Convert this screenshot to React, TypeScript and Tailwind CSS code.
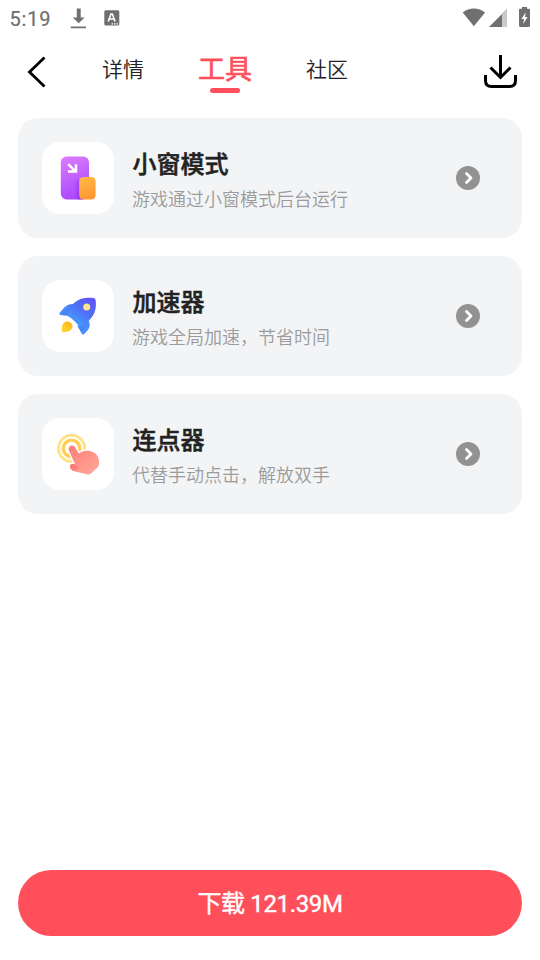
import React, { useState } from 'react';
import clsx from 'clsx';

interface Tool {
    id: string;
    title: string;
    description: string;
    icon: React.FC;
}

const WindowIcon: React.FC = () => (
    <svg width="72" height="72" viewBox="0 0 72 72" fill="none">
        <defs>
            <linearGradient id="window-back" x1="22" y1="14" x2="40" y2="58" gradientUnits="userSpaceOnUse">
                <stop stopColor="#dc7cfd" />
                <stop offset="1" stopColor="#a544fb" />
            </linearGradient>
            <linearGradient id="window-front" x1="40" y1="35" x2="50" y2="57" gradientUnits="userSpaceOnUse">
                <stop stopColor="#ffb946" />
                <stop offset="1" stopColor="#ff9530" />
            </linearGradient>
            <linearGradient id="window-shade" x1="32" y1="0" x2="39" y2="0" gradientUnits="userSpaceOnUse">
                <stop stopColor="#8f25e0" stopOpacity="0" />
                <stop offset="1" stopColor="#8a18d8" stopOpacity="0.6" />
            </linearGradient>
        </defs>
        <rect x="18.8" y="14.5" width="28.2" height="43" rx="5.8" fill="url(#window-back)" />
        <path d="M32 38h8v19.500h-8z" fill="url(#window-shade)" />
        <rect x="37.2" y="35" width="16.4" height="22.5" rx="4.2" fill="url(#window-front)" />
        <path d="M26.2 22.2l7 7M34 22.3v7.3h-8" stroke="#fff" strokeWidth="2.5" />
    </svg>
);

const RocketIcon: React.FC = () => (
    <svg width="72" height="72" viewBox="0 0 72 72" fill="none">
        <defs>
            <linearGradient id="rocket-body" x1="52" y1="18" x2="33" y2="46" gradientUnits="userSpaceOnUse">
                <stop stopColor="#6251f5" />
                <stop offset="0.5" stopColor="#4f70f8" />
                <stop offset="1" stopColor="#43a4ff" />
            </linearGradient>
            <linearGradient id="rocket-fin" x1="20" y1="30" x2="46" y2="46" gradientUnits="userSpaceOnUse">
                <stop stopColor="#4b91fa" />
                <stop offset="0.5" stopColor="#3869ef" />
                <stop offset="1" stopColor="#4a8ffa" />
            </linearGradient>
            <linearGradient id="rocket-flame" x1="29" y1="41" x2="20" y2="52" gradientUnits="userSpaceOnUse">
                <stop stopColor="#ffb20d" />
                <stop offset="1" stopColor="#ffd83a" />
            </linearGradient>
        </defs>
        <path
            d="M34 24.3c-5-1.2-9.300.2-12 3.500l-4.200 5c-.9 1.200-.3 2.200 1 2.300l8 .8zM46 39.500c2.500 4 2.300 8-.5 11l-3.200 3.400c-1 1-2.200.7-2.800-.6L35.500 46z"
            fill="url(#rocket-fin)"
        />
        <path
            d="M25 35.500C27 26 34 18.700 43.500 17.900c2.600-.3 5.500-.3 7.800.2 1.400.2 2.200 1.200 2.400 2.500.9 8.700-1.300 14.700-6.200 19.300-2.600 2.600-6 5-10 7.300-2.700-4.200-7-8.700-12.500-11.700z"
            fill="url(#rocket-body)"
        />
        <circle cx="44.700" cy="27" r="3.500" fill="#ffe58a" />
        <path
            d="M21.500 43.300c2-2.200 5.100-2.300 7.200-.5 2.200 1.900 2.400 4.800.6 6.700-1.600 1.700-4.600 2.500-8.200 2.700-1.200 0-1.700-.6-1.500-1.700.4-2.500.3-5.200 1.900-7.200z"
            fill="url(#rocket-flame)"
        />
    </svg>
);

const ClickerIcon: React.FC = () => (
    <svg width="72" height="72" viewBox="0 0 72 72" fill="none">
        <defs>
            <linearGradient id="clicker-hand" x1="28" y1="30" x2="47" y2="57" gradientUnits="userSpaceOnUse">
                <stop stopColor="#fd8078" />
                <stop offset="1" stopColor="#ffa396" />
            </linearGradient>
            <linearGradient id="clicker-thumb" x1="28" y1="46" x2="40" y2="55" gradientUnits="userSpaceOnUse">
                <stop stopColor="#f8756e" />
                <stop offset="1" stopColor="#ff9689" />
            </linearGradient>
        </defs>
        <circle cx="29.600" cy="30.400" r="13.100" stroke="#ffe38b" strokeWidth="3" />
        <circle cx="29.600" cy="30.400" r="8.300" stroke="#ffce54" strokeWidth="3.400" />
        <path
            d="M27 32.500c-1-2.600.6-5 3-5 1.700 0 2.700.9 3.400 2.300l3.300 5.700c3.300-2.500 7-3.300 11-2.600 6 1 9.500 5.500 9.400 11.500 0 3-1 5-3.200 6.700l-5 4.400c-1.200 1-2.600 1.200-4.200.8l-12.500-3c-3-.9-4.700-3-4.200-5.300.4-1.800 2.300-2.500 5-1.800z"
            fill="url(#clicker-hand)"
            stroke="#fff"
            strokeWidth="3"
            strokeLinejoin="round"
            paintOrder="stroke"
        />
        <path
            d="M28.300 48.200c-.4-1.700.8-2.400 2.700-2.200 2.500.3 4.600 2 6.100 5l-4.500 2c-2.600-.8-4.200-2.200-4.300-4.800z"
            fill="url(#clicker-thumb)"
        />
    </svg>
);

const TOOLS: Tool[] = [
    { id: 'window', title: '小窗模式', description: '游戏通过小窗模式后台运行', icon: WindowIcon },
    { id: 'speed', title: '加速器', description: '游戏全局加速，节省时间', icon: RocketIcon },
    { id: 'clicker', title: '连点器', description: '代替手动点击，解放双手', icon: ClickerIcon },
];

const TABS = ['详情', '工具', '社区'];

const StatusBar: React.FC = () => (
    <div className="flex h-9 items-center justify-between text-[#757575]">
        <div className="flex items-center">
            <span className="ml-[9.5px] w-[60.5px] pt-px font-['Roboto',sans-serif] text-[20px] leading-6 tracking-[0.8px] text-[#6e6e6e] [-webkit-text-stroke:0.2px_#6e6e6e]">
                5:19
            </span>
            <svg width="16" height="22" viewBox="0 0 16 22" fill="#707070">
                <path d="M6.800 1.500h3.900v9h3.900L8.700 16.300 2.800 10.500h4zM.8 19.400h15.200v1.800H.8z" />
            </svg>
            <svg className="ml-[18px]" width="16" height="16" viewBox="0 0 16 16">
                <rect x="0.300" y="0.300" width="15" height="15.200" rx="1.500" fill="#6f6f6f" />
                <path
                    d="M4.200 11.500L7 4h1.300l2.800 7.500M5.200 9h5"
                    stroke="#fff"
                    strokeWidth="1.600"
                    fill="none"
                />
                <path d="M7.600 13.300h1.500v1.200H7.600zM10 13.300h1.500v1.200H10zM12.400 13.300h1.500v1.200h-1.500z" fill="#fff" />
            </svg>
        </div>
        <svg width="80" height="36" viewBox="0 0 80 36" fill="#707070">
            <path d="M2.700 12.500C9 7 18.500 7 25 12.500L13.900 26.300z" />
            <path d="M47 9v18H29z" />
            <path d="M42 14L47 9v18h-5z" fill="#cacaca" />
            <path d="M62 7h5v1.800h1.700c.8 0 1.300.5 1.300 1.300v15.500c0 .8-.5 1.400-1.300 1.400h-8.400c-.8 0-1.300-.6-1.300-1.400V10.100c0-.8.5-1.300 1.300-1.300H62z" />
            <path d="M65.700 12.200l-4.300 6.800h2.600l-.7 5 4.200-7h-2.500z" fill="#fff" />
        </svg>
    </div>
);

const ToolCard: React.FC<{ tool: Tool }> = ({ tool }) => {
    const Icon = tool.icon;

    return (
        <button className="flex h-[120px] w-full items-center rounded-[20px] bg-[#f3f4f6] pr-[42px] pl-6 text-left">
            <div className="size-[72px] shrink-0 rounded-[18px] bg-white">
                <Icon />
            </div>
            <div className="ml-[18px] flex-1">
                <h2 className="pl-[0.5px] text-[24px] leading-[36px] font-medium text-[#222] [-webkit-text-stroke:0.5px_#222]">
                    {tool.title}
                </h2>
                <p className="mt-1 text-[18px] leading-[27px] font-[350] text-[#9b9b9b]">{tool.description}</p>
            </div>
            <svg width="24" height="24" viewBox="0 0 24 24" fill="none">
                <circle cx="12" cy="12" r="12" fill="#929292" />
                <path
                    d="M10.500 7.500L15 12l-4.500 4.500"
                    stroke="#fff"
                    strokeWidth="2.800"
                    strokeLinecap="round"
                    strokeLinejoin="round"
                />
            </svg>
        </button>
    );
};

export default function App() {
    const [activeTab, setActiveTab] = useState('工具');

    return (
        <div className="flex h-[960px] w-[540px] flex-col overflow-hidden bg-white font-['Noto_Sans_CJK_SC',sans-serif]">
            <StatusBar />

            <header className="flex h-[72px] shrink-0 items-center pr-[22px] pl-[26px]">
                <button aria-label="返回">
                    <svg width="22" height="34" viewBox="0 0 22 34" fill="none">
                        <path d="M18.500 2.500L3.500 17l15 14.500" stroke="#000" strokeWidth="2.800" />
                    </svg>
                </button>
                <nav className="ml-[54px] flex flex-1 items-center gap-[54px]">
                    {TABS.map((tab) => (
                        <button
                            key={tab}
                            onClick={() => setActiveTab(tab)}
                            className={clsx(
                                'relative -mt-2 h-10 leading-[38px]',
                                activeTab === tab
                                    ? 'text-[27px] font-normal text-[#ff4e5b] [-webkit-text-stroke:0.6px_#ff4e5b]'
                                    : 'text-[21px] font-[350] text-[#222]'
                            )}
                        >
                            {tab}
                            {activeTab === tab && (
                                <span className="absolute top-10 left-3 h-[5px] w-[30px] rounded-full bg-[#ff4e5b]" />
                            )}
                        </button>
                    ))}
                </nav>
                <button aria-label="下载管理">
                    <svg width="36" height="36" viewBox="0 0 36 36" fill="none" stroke="#000" strokeWidth="3">
                        <path d="M18.500 1v23M8.500 13.500l10 10 10-10" />
                        <path d="M3.500 21v5.500c0 4 2 6 6 6h18c4 0 6-2 6-6V21" />
                    </svg>
                </button>
            </header>

            <main className="flex flex-1 flex-col gap-[18px] px-[18px] pt-[10px]">
                {TOOLS.map((tool) => (
                    <ToolCard key={tool.id} tool={tool} />
                ))}
            </main>

            <footer className="px-[18px] pb-6">
                <button className="h-[66px] w-full rounded-full bg-[#ff4f5b] pt-0.5 font-['Roboto','Noto_Sans_CJK_SC',sans-serif] text-[24px] font-normal tracking-[-0.35px] text-white [-webkit-text-stroke:0.4px_white]">
                    下载 121.39M
                </button>
            </footer>
        </div>
    );
}
